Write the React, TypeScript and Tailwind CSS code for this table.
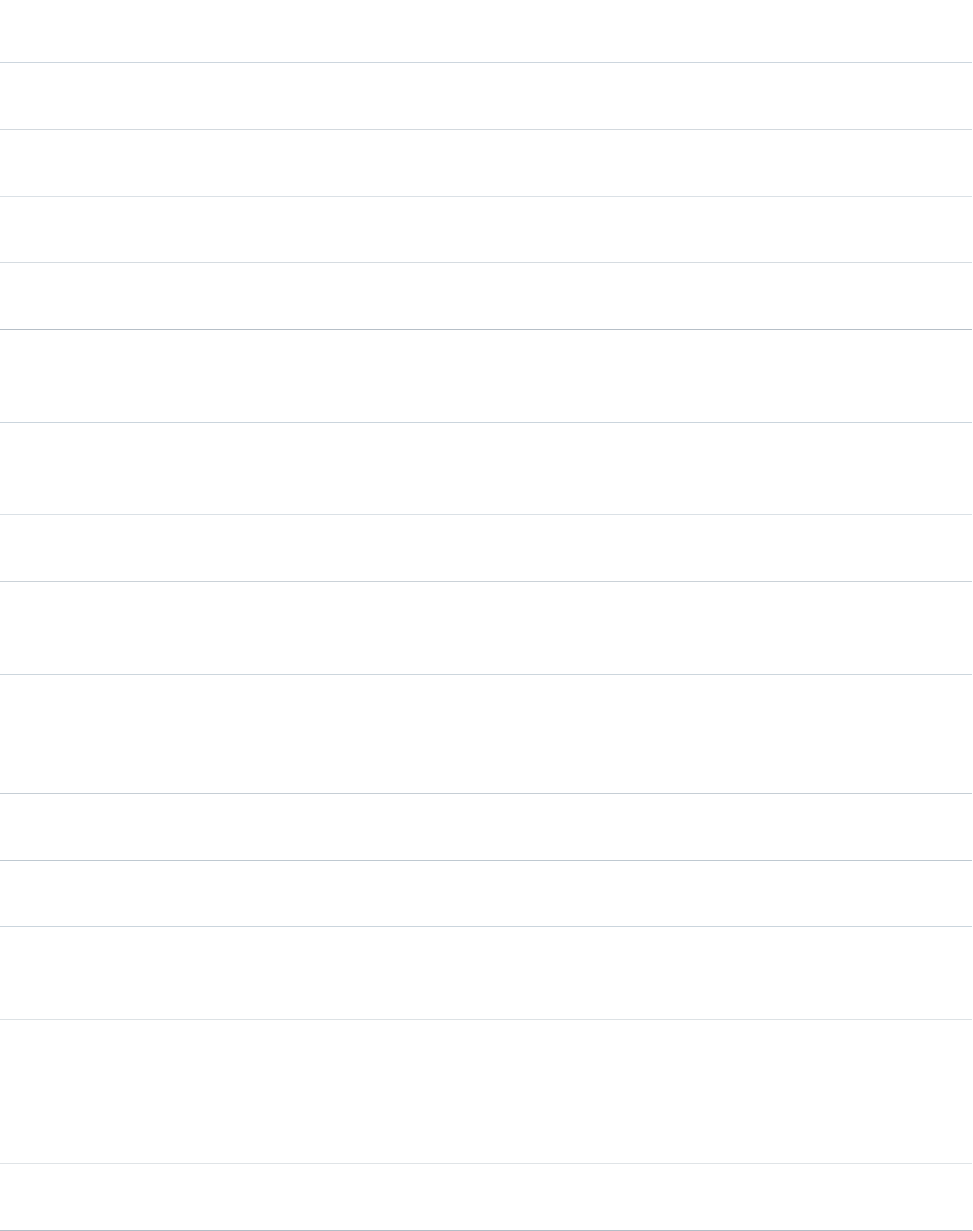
export default function App() {
  return (
    <div className="w-[972px] bg-white font-['Liberation_Sans',sans-serif]">
      <div className="h-[63px] border-b border-[#cdd6de]" />
      <div className="h-[67px] border-b border-[#d3d9de]" />
      <div className="h-[67px] border-b border-[#dbe1e6]" />
      <div className="h-[66px] border-b border-[#d6dce1]" />
      <div className="h-[67px] border-b border-[#b6bfc7]" />
      <div className="h-[93px] border-b border-[#cbd5dd]" />
      <div className="h-[92px] border-b border-[#dbe1e6]" />
      <div className="h-[67px] border-b border-[#cbd2d8]" />
      <div className="h-[93px] border-b border-[#cdd6dd]" />
      <div className="h-[119px] border-b border-[#c6ced5]" />
      <div className="h-[67px] border-b border-[#bfc9d1]" />
      <div className="h-[66px] border-b border-[#cbd5dd]" />
      <div className="h-[93px] border-b border-[#dde2e5]" />
      <div className="h-[144px] border-b border-[#e0e4e7]" />
      <div className="h-[67px] border-b border-[#b3bec7]" />
    </div>
  );
}
